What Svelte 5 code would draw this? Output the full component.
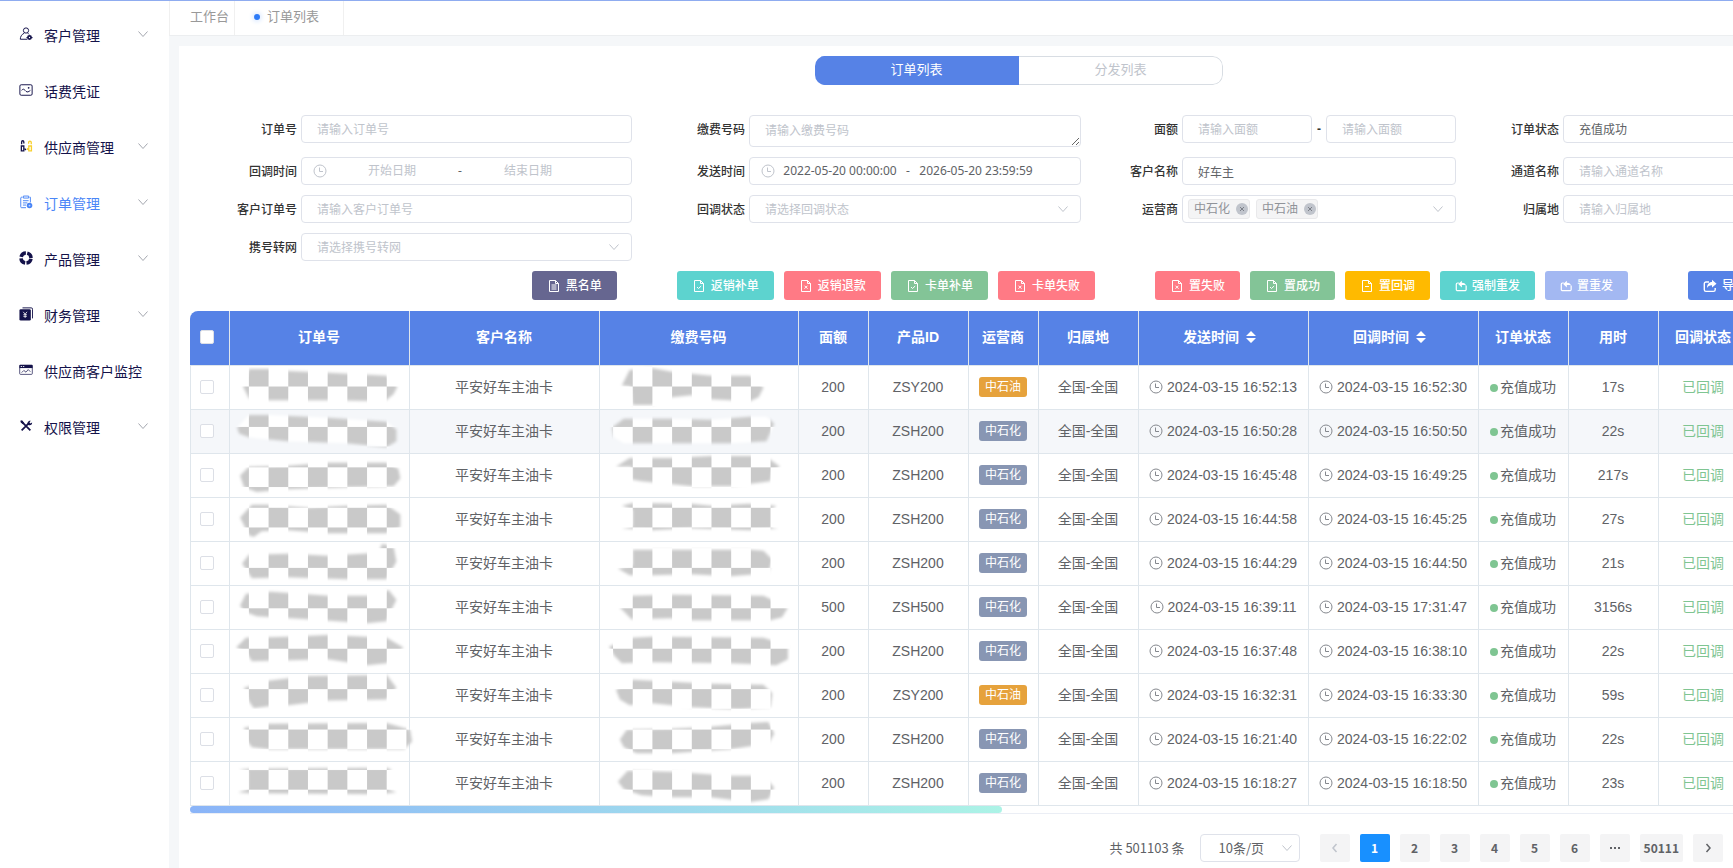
<script lang="ts">
  const menu = [
    { label: "客户管理", icon: "customer", sub: true },
    { label: "话费凭证", icon: "voucher", sub: false },
    { label: "供应商管理", icon: "supplier", sub: true },
    { label: "订单管理", icon: "order", sub: true },
    { label: "产品管理", icon: "product", sub: true },
    { label: "财务管理", icon: "finance", sub: true },
    { label: "供应商客户监控", icon: "monitor", sub: false },
    { label: "权限管理", icon: "auth", sub: true },
  ];

  const actions = [
    [{ label: "黑名单", icon: "list", color: "slate" }],
    [
      { label: "返销补单", icon: "check", color: "teal" },
      { label: "返销退款", icon: "cross", color: "red" },
      { label: "卡单补单", icon: "check", color: "green" },
      { label: "卡单失败", icon: "cross", color: "red" },
    ],
    [
      { label: "置失败", icon: "cross", color: "red" },
      { label: "置成功", icon: "check", color: "green" },
      { label: "置回调", icon: "minus", color: "amber" },
      { label: "强制重发", icon: "resend", color: "teal" },
      { label: "置重发", icon: "resend", color: "pale" },
    ],
    [{ label: "导出", icon: "export", color: "blue" }],
  ];

  // order / phone: outline of the smear that hides the number
  const rows = [
    { amount: 200, product: "ZSY200", carrier: "中石油", sent: "16:52:13", back: "16:52:30", cost: "17s",
      order: "11,21 17,3 37,3 57,5 98,7 158,10 169,21 165,29 156,36 98,35 37,35 17,33",
      phone: "20,20 28,4 51,2 71,6 111,10 151,10 158,14 165,22 160,32 151,36 111,34 91,30 71,32 51,40 31,40 29,21" },
    { amount: 200, product: "ZSH200", carrier: "中石化", sent: "16:50:28", back: "16:50:50", cost: "22s",
      order: "5,18 17,5 37,5 98,8 158,12 168,20 168,32 158,38 117,34 57,32 17,28 7,24",
      phone: "10,18 22,9 71,9 111,10 151,7 168,7 176,14 168,32 131,34 51,34 22,34 12,28" },
    { amount: 200, product: "ZSH200", carrier: "中石化", sent: "16:45:48", back: "16:49:25", cost: "217s",
      order: "8,22 17,13 57,12 98,9 158,9 170,15 172,25 165,33 117,34 57,36 25,39 12,34",
      phone: "14,13 28,4 71,4 111,2 158,2 172,6 182,13 174,18 172,28 131,33 91,33 71,31 40,28 30,26 30,13" },
    { amount: 200, product: "ZSH200", carrier: "中石化", sent: "16:44:58", back: "16:45:25", cost: "27s",
      order: "8,20 20,7 37,7 77,10 117,8 158,7 172,17 172,30 158,36 98,36 57,33 30,34 22,40 17,38 12,28",
      phone: "20,8 31,5 91,6 111,8 150,6 178,8 174,12 174,30 180,31 151,33 91,31 51,33 20,31 31,29 31,12" },
    { amount: 200, product: "ZSH200", carrier: "中石化", sent: "16:44:29", back: "16:44:50", cost: "21s",
      order: "10,22 17,13 57,12 98,14 150,11 153,2 165,4 168,20 158,38 117,38 57,36 20,37 14,28",
      phone: "16,27 31,24 31,8 151,8 165,9 174,18 170,32 131,35 91,33 51,34 28,34" },
    { amount: 500, product: "ZSH500", carrier: "中石化", sent: "16:39:11", back: "17:31:47", cost: "3156s",
      order: "8,20 14,8 40,6 98,10 140,10 160,4 168,14 162,26 158,36 138,38 77,34 25,31 12,26",
      phone: "18,22 30,10 71,9 165,10 190,22 184,32 172,35 91,35 71,33 30,34" },
    { amount: 200, product: "ZSH200", carrier: "中石化", sent: "16:37:48", back: "16:38:10", cost: "22s",
      order: "4,18 14,8 57,7 98,5 158,8 175,18 172,22 158,34 138,36 98,30 20,32 15,24",
      phone: "7,17 31,8 51,7 165,8 190,16 190,30 178,36 131,34 51,33 20,34 12,26" },
    { amount: 200, product: "ZSY200", carrier: "中石油", sent: "16:32:31", back: "16:33:30", cost: "59s",
      order: "12,14 37,7 77,2 158,1 168,14 158,26 98,27 57,32 37,33 22,35 17,28",
      phone: "14,16 31,6 91,9 111,10 165,11 174,20 172,34 140,36 91,34 51,30 28,32 18,26" },
    { amount: 200, product: "ZSH200", carrier: "中石化", sent: "16:21:40", back: "16:22:02", cost: "22s",
      order: "12,10 37,6 158,5 182,12 184,24 176,32 98,32 37,32 20,30 14,22",
      phone: "18,22 25,12 71,11 111,9 151,5 170,4 176,16 170,26 131,32 71,36 35,36 22,30" },
    { amount: 200, product: "ZSH200", carrier: "中石化", sent: "16:18:27", back: "16:18:50", cost: "23s",
      order: "7,8 17,7 158,6 163,8 160,12 160,28 168,31 150,33 17,32 6,31 16,28 16,10",
      phone: "16,20 26,9 71,10 131,14 165,14 176,26 170,38 151,41 111,36 71,36 40,34 22,28" },
  ];

  const columns = ["订单号", "客户名称", "缴费号码", "面额", "产品ID", "运营商", "归属地", "发送时间", "回调时间", "订单状态", "用时", "回调状态"];
  const widths = [40, 180, 190, 199, 70, 100, 70, 100, 170, 170, 90, 90, 90];
  const sortable = ["发送时间", "回调时间"];

  let active = $state("订单管理");
  let view = $state("订单列表");
  let page = $state(1);
  let carriers = $state(["中石化", "中石油"]);
</script>

{#snippet chevron()}
  <svg class="chevron" viewBox="0 0 12 12" aria-hidden="true"><path d="M1.500 3.500 6 8.500l4.500-5" /></svg>
{/snippet}

{#snippet clock()}
  <svg class="clock" viewBox="0 0 14 14" aria-hidden="true">
    <circle cx="7" cy="7" r="6" /><path d="M6.500 3.500v4h3.500" />
  </svg>
{/snippet}

{#snippet menuIcon(name: string)}
  <svg class="menu-icon" viewBox="0 0 16 16" aria-hidden="true">
    {#if name === "customer"}
      <circle cx="8" cy="4" r="3" class="line" />
      <path d="M6 7C3 8.500 1.500 11 1.500 14h8M10 7l1.500 1.500" class="line" />
      <circle cx="12" cy="12" r="2.800" /><path d="M8.500 11.500h7v1.200h-7z" />
      <circle cx="12" cy="12" r=".8" fill="#fff" />
    {:else if name === "voucher"}
      <rect x="1" y="2" width="14" height="12" rx="1.500" class="line" />
      <path d="M3 8.500c2-3 3.500-.5 5 1s3 .5 5-1" class="line" /><circle cx="11" cy="5.500" r="1" />
    {:else if name === "supplier"}
      <path d="M3 6V3.500C3 1.500 5.500 1.500 5.500 3.500V5M2.700 8h2.800v5.500H2.700zM6.500 11l1.500 1.500" class="line bold" />
      <path d="M11 5.500V4c0-2 3-2 3 0v2M11.200 8h3v5.500h-3zM10.500 10.500 9 12" class="line bold gold" />
    {:else if name === "order"}
      <path d="M4 2.500H3a1 1 0 0 0-1 1v10a1 1 0 0 0 1 1h5M12 2.500h1v6M5 1.200h6v2.300H5zM4.500 6.500h6.500M4.500 9h5M4.500 11.500h3.500" class="line" />
      <circle cx="12" cy="12" r="3.200" /><circle cx="12" cy="12" r="1" fill="#bcd4fb" />
    {:else if name === "product"}
      <circle cx="8" cy="8" r="5.700" class="ring" />
    {:else if name === "finance"}
      <path d="M4 1h10a1.500 1.500 0 0 1 1.500 1.500V13" class="line" />
      <rect x=".5" y="2.500" width="13" height="13" rx="1.500" />
      <path d="M4.800 5.500 7 8.200l2.200-2.700M7 8v4.500M5 8.800h4M5 10.700h4" stroke="#fff" stroke-width=".9" fill="none" />
    {:else if name === "monitor"}
      <rect x=".8" y="2.500" width="14.400" height="10.500" rx="1" class="line thin" />
      <path d="M.5 2.200h15v3.600H.5z" /><path d="M2 4h1.500M4.500 4H6" stroke="#fff" />
      <path d="m3 11 2.500-2.500L8 10.500l2.500-3 2.500 2.500" class="line thin" />
    {:else}
      <path d="m3 3 10 10M3 13l8-8" class="line thick" />
      <path d="M10 6.500C9 4 11 1.500 13.500 2L12 3.800l.8 1.200 2.200-1c.2 2.500-2 4-5 2.500z" />
      <path d="m1.500 2 2-.5L6 4.500 4.500 6 2 4z" />
    {/if}
  </svg>
{/snippet}

{#snippet actionIcon(name: string)}
  <svg class="action-icon" class:small={name === "resend"} viewBox="0 0 14 14" aria-hidden="true">
    {#if name === "resend"}
      <path d="M4.500 3.500H3A1.500 1.500 0 0 0 1.500 5v6A1.500 1.500 0 0 0 3 12.500h8.500a1.500 1.500 0 0 0 1.500-1.500V6.500" stroke-width="1.400" />
      <path d="M8 .8v2.500c3 0 4.700 1.500 4.700 3.200C11.200 5.800 10 5.900 8 5.900v2.800L3.700 4.700z" fill="currentColor" stroke="none" />
    {:else if name === "export"}
      <path d="M6 3H3A1.700 1.700 0 0 0 1.300 4.700v6A1.700 1.700 0 0 0 3 12.400h7.500a1.700 1.700 0 0 0 1.700-1.700V9" stroke-width="1.400" />
      <path d="M9 .8 13.500 4.700 9 8.500V6.300C6.500 6.200 5.200 7 4 9c0-3.500 2-6 5-6z" fill="currentColor" stroke="none" />
    {:else}
      <path d="M2.500 1.500h6l3 3v8h-9zM8.500 1.500v3h3" />
      {#if name === "list"}<path d="M4.500 6h5M4.500 8h5M4.500 10h5" />
      {:else if name === "check"}<path d="m5 8 1.500 1.500L9.200 7" />
      {:else if name === "cross"}<path d="m5.500 6.700 3 3M8.500 6.700l-3 3" />
      {:else}<path d="M5 7.500h4" />{/if}
    {/if}
  </svg>
{/snippet}

{#snippet mosaic(id: string, points: string, x: number, row: number)}
  <svg class="mosaic" viewBox="0 0 200 44" aria-hidden="true">
    <defs>
      <pattern id="{id}-check" {x} y={21 - (11 * row) / 3} width="40.300" height="40.300" patternUnits="userSpaceOnUse">
        <rect width="41" height="41" fill="#fff" />
        <rect x="20.150" width="20.150" height="20.150" fill="#c9c9c9" />
        <rect y="20.150" width="20.150" height="20.150" fill="#c9c9c9" />
      </pattern>
      <filter id="{id}-soft" x="-10%" y="-20%" width="120%" height="140%"><feGaussianBlur stdDeviation="1.600" /></filter>
      <mask id="{id}-mask" maskUnits="userSpaceOnUse" x="-5" y="-5" width="210" height="54">
        <polygon {points} fill="#fff" filter="url(#{id}-soft)" />
      </mask>
    </defs>
    <rect x="-5" y="-5" width="210" height="54" fill="url(#{id}-check)" mask="url(#{id}-mask)" />
  </svg>
{/snippet}

<div class="app">
  <aside>
    <nav>
      {#each menu as item}
        <a href="#{item.icon}" class:active={active === item.label} onclick={() => (active = item.label)}>
          {@render menuIcon(item.icon)}
          <span>{item.label}</span>
          {#if item.sub}{@render chevron()}{/if}
        </a>
      {/each}
    </nav>
  </aside>

  <main>
    <div class="tabs">
      <a href="#home">工作台</a>
      <a href="#orders" class="current"><i></i>订单列表</a>
    </div>

    <section class="card">
      <div class="toggle">
        {#each ["订单列表", "分发列表"] as name}
          <button class:on={view === name} onclick={() => (view = name)}>{name}</button>
        {/each}
      </div>

      <form class="filters">
        <label for="order-no">订单号</label>
        <input id="order-no" placeholder="请输入订单号" />
        <label for="phone">缴费号码</label>
        <textarea id="phone" placeholder="请输入缴费号码"></textarea>
        <label for="amount-min">面额</label>
        <div class="pair">
          <input id="amount-min" placeholder="请输入面额" />
          <b>-</b>
          <input aria-label="最大面额" placeholder="请输入面额" />
        </div>
        <label for="status">订单状态</label>
        <div class="select">
          <select id="status"><option>充值成功</option></select>
          {@render chevron()}
        </div>

        <label for="back-start">回调时间</label>
        <div class="range">
          {@render clock()}
          <input id="back-start" placeholder="开始日期" />
          <span>-</span>
          <input aria-label="结束日期" placeholder="结束日期" />
        </div>
        <label for="send-start">发送时间</label>
        <div class="range">
          {@render clock()}
          <input id="send-start" value="2022-05-20 00:00:00" />
          <span>-</span>
          <input aria-label="结束时间" value="2026-05-20 23:59:59" />
        </div>
        <label for="customer-name">客户名称</label>
        <input id="customer-name" value="好车主" />
        <label for="channel">通道名称</label>
        <input id="channel" placeholder="请输入通道名称" />

        <label for="customer-no">客户订单号</label>
        <input id="customer-no" placeholder="请输入客户订单号" />
        <label for="back-status">回调状态</label>
        <div class="select">
          <select id="back-status" class="empty"><option>请选择回调状态</option></select>
          {@render chevron()}
        </div>
        <label for="carrier">运营商</label>
        <div class="select chips">
          {#each carriers as name}
            <span class="chip">
              {name}
              <button type="button" aria-label="移除{name}" onclick={() => (carriers = carriers.filter((c) => c !== name))}>
                <svg viewBox="0 0 12 12"><path d="m4 4 4 4M8 4l-4 4" /></svg>
              </button>
            </span>
          {/each}
          <input id="carrier" />
          {@render chevron()}
        </div>
        <label for="region">归属地</label>
        <input id="region" placeholder="请输入归属地" />

        <label for="ported">携号转网</label>
        <div class="select">
          <select id="ported" class="empty"><option>请选择携号转网</option></select>
          {@render chevron()}
        </div>
      </form>

      <div class="actions">
        {#each actions as group}
          <div class="group">
            {#each group as a}
              <button class={a.color}>{@render actionIcon(a.icon)}{a.label}</button>
            {/each}
          </div>
        {/each}
      </div>

      <div class="table-wrap">
        <table>
          <colgroup>
            {#each widths as w}<col style="width: {w}px" />{/each}
          </colgroup>
          <thead>
            <tr>
              <th><input type="checkbox" aria-label="全选" /></th>
              {#each columns as c}
                <th>
                  {c}{#if sortable.includes(c)}<svg class="sort" viewBox="0 0 10 12" aria-hidden="true"><path d="M0 5 5 0l5 5zM0 7l5 5 5-5z" /></svg>{/if}
                </th>
              {/each}
            </tr>
          </thead>
          <tbody>
            {#each rows as r, i}
              <tr class:hover={i === 1}>
                <td><input type="checkbox" aria-label="选择第{i + 1}行" /></td>
                <td class="covered">{@render mosaic(`o${i}`, r.order, 17, i)}</td>
                <td>平安好车主油卡</td>
                <td class="covered">{@render mosaic(`p${i}`, r.phone, 11, i)}</td>
                <td>{r.amount}</td>
                <td>{r.product}</td>
                <td><span class="tag" class:orange={r.carrier === "中石油"}>{r.carrier}</span></td>
                <td>全国-全国</td>
                <td class="time">{@render clock()}2024-03-15 {r.sent}</td>
                <td class="time">{@render clock()}2024-03-15 {r.back}</td>
                <td><i class="dot"></i>充值成功</td>
                <td>{r.cost}</td>
                <td class="done">已回调</td>
              </tr>
            {/each}
          </tbody>
        </table>
        <div class="scrollbar"><div class="thumb"></div></div>
      </div>

      <div class="pager">
        <span class="total">共 501103 条</span>
        <div class="select size">
          <select aria-label="每页条数"><option>10条/页</option></select>
          {@render chevron()}
        </div>
        <div class="pages">
          <button disabled aria-label="上一页"><svg viewBox="0 0 12 12"><path d="M7.500 2 4 6l3.500 4" /></svg></button>
          {#each [1, 2, 3, 4, 5, 6] as n}
            <button class:on={page === n} onclick={() => (page = n)}>{n}</button>
          {/each}
          <button aria-label="更多"><svg viewBox="0 0 12 12"><path d="M1 5h2v2H1zM5 5h2v2H5zM9 5h2v2H9z" class="solid" /></svg></button>
          <button onclick={() => (page = 50111)}>50111</button>
          <button aria-label="下一页"><svg viewBox="0 0 12 12"><path d="M4.500 2 8 6l-3.500 4" /></svg></button>
        </div>
      </div>
    </section>
  </main>
</div>

<style>
  :global(body) {
    overflow: hidden;
  }
  .app {
    display: flex;
    min-height: 100vh;
    border-top: 1px solid #8facf0;
    box-sizing: border-box;
    background: #f5f7f9;
    color: #606266;
    font: 12px/16px "Liberation Sans", "Noto Sans CJK SC", sans-serif;
  }
  .app :global(*) {
    box-sizing: border-box;
  }
  button, input, select, textarea {
    font: inherit;
    color: inherit;
    margin: 0;
  }
  button {
    border: 0;
    padding: 0;
    cursor: pointer;
  }
  svg {
    fill: none;
    stroke: currentColor;
    flex: none;
  }
  .chevron {
    width: 12px;
    height: 12px;
    color: #c0c4cc;
  }
  .clock {
    width: 14px;
    height: 14px;
  }

  aside {
    width: 169px;
    flex: none;
    background: #fff;
    padding-top: 6px;
  }
  nav a {
    display: flex;
    align-items: center;
    height: 56px;
    padding: 0 20px 2px 19px;
    color: #14124a;
    font-size: 14px;
    text-decoration: none;
    white-space: nowrap;
  }
  nav a.active { color: #4a86f7; }
  nav span {
    margin-left: 11px;
    padding-top: 4px;
  }
  nav .chevron {
    margin-left: auto;
    color: #a5a8b0;
  }
  .menu-icon {
    width: 14px;
    height: 14px;
    fill: currentColor;
    stroke: none;
  }
  .menu-icon .line {
    fill: none;
    stroke: currentColor;
    stroke-width: 1.100;
  }
  .menu-icon .thin { stroke-width: .8; }
  .menu-icon .bold { stroke-width: 1.500; }
  .menu-icon .gold { stroke: #f7cf2d; }
  .menu-icon .thick { stroke-width: 2; }
  .menu-icon .ring {
    fill: none;
    stroke: currentColor;
    stroke-width: 4;
    stroke-dasharray: 7.350 1.600;
    stroke-dashoffset: -.8;
  }

  main {
    flex: 1;
    min-width: 0;
    overflow: hidden;
  }
  .tabs {
    display: flex;
    height: 35px;
    background: #fff;
    border-bottom: 1px solid #eceef0;
    border-left: 1px solid #f0f0f0;
  }
  .tabs a {
    display: flex;
    align-items: center;
    padding: 0 5px 3px 20px;
    border-right: 1px solid #f0f0f0;
    color: #999;
    font-size: 13px;
    text-decoration: none;
  }
  .tabs .current { padding: 0 24px 3px 19px; }
  .tabs i {
    width: 6px;
    height: 6px;
    margin-right: 7px;
    border-radius: 50%;
    background: #2d7bf8;
    box-shadow: 0 0 4px 2px #e0ecff;
  }

  /* wider than most windows, the right part is cut */
  .card {
    min-width: 1680px;
    min-height: calc(100vh - 47px);
    margin: 10px 10px 0;
    padding: 10px 11px 20px;
    background: #fff;
  }
  .toggle {
    display: flex;
    width: 408px;
    margin: 0 auto 30px;
    border-radius: 10px;
    overflow: hidden;
  }
  .toggle button {
    flex: 1;
    height: 29px;
    padding-bottom: 2px;
    background: #fff;
    border: 1px solid #d8dde3;
    border-left: 0;
    border-radius: 0 10px 10px 0;
    color: #c0c4cc;
    font-size: 13px;
  }
  .toggle .on {
    background: #5682e6;
    border-color: #5682e6;
    border-radius: 0;
    color: #fff;
  }

  .filters {
    display: grid;
    grid-template-columns: 107px 331fr 109px 332fr 93px 274fr 99px 285fr;
    gap: 10px 4px;
    align-items: start;
  }
  .filters label {
    line-height: 30px;
    height: 28px;
    text-align: right;
    color: #333;
    font-weight: 500;
  }
  .filters > input, .filters textarea, .pair input, .select, .range {
    width: 100%;
    min-width: 0;
    height: 28px;
    padding: 1px 15px 0;
    border: 1px solid #dfe2ea;
    border-radius: 4px;
    background: #fff;
    outline: none;
  }
  .filters textarea {
    display: block;
    height: 32px;
    padding: 7px 15px;
    resize: vertical;
  }
  ::placeholder { color: #c0c4cc; }
  .pair {
    display: flex;
    align-items: center;
  }
  .pair b {
    flex: none;
    width: 14px;
    text-align: center;
    color: #333;
  }
  .select {
    display: flex;
    align-items: center;
    padding: 0 11px 0 0;
  }
  .select select {
    flex: 1;
    height: 26px;
    padding: 1px 15px 0;
    border: 0;
    background: none;
    appearance: none;
    outline: none;
  }
  .select .empty { color: #c0c4cc; }
  .chips {
    gap: 6px;
    padding-left: 5px;
  }
  .chips input {
    flex: 1;
    min-width: 0;
    border: 0;
    outline: none;
  }
  .chip {
    display: flex;
    align-items: center;
    gap: 6px;
    height: 20px;
    padding: 0 1px 0 5px;
    border: 1px solid #e9e9eb;
    border-radius: 3px;
    background: #f4f4f5;
    color: #909399;
    white-space: nowrap;
  }
  .chip button {
    width: 12px;
    height: 12px;
    border-radius: 50%;
    background: #c0c4cc;
    color: #7c8089;
  }
  .chip svg { display: block; }
  .range {
    display: flex;
    align-items: center;
    padding: 0 11px;
    color: #606266;
    font-family: "Noto Sans", "Noto Sans CJK SC", sans-serif;
  }
  .range .clock {
    margin-right: 4px;
    color: #c0c4cc;
  }
  .range input {
    width: 122px;
    padding: 0;
    border: 0;
    text-align: center;
    outline: none;
  }
  .range span {
    width: 14px;
    text-align: center;
  }

  .actions {
    display: flex;
    justify-content: flex-end;
    gap: 60px;
    margin: 10px 87px 11px 0;
  }
  .group {
    display: flex;
    gap: 10px;
  }
  .actions button {
    display: flex;
    align-items: center;
    gap: 5px;
    height: 29px;
    padding: 0 15px;
    border-radius: 3px;
    color: #fff;
    font-weight: 500;
    white-space: nowrap;
  }
  .action-icon {
    width: 14px;
    height: 14px;
  }
  .action-icon.small {
    width: 12px;
    height: 12px;
  }
  .slate { background: #666690; }
  .teal { background: #5dd3cf; }
  .red { background: #ff7a85; }
  .green { background: #83c497; }
  .amber { background: #ffba00; }
  .pale { background: #a3b8f2; }
  .blue { background: #5682e6; }

  .table-wrap {
    border-radius: 8px 0 0 0;
    overflow: hidden;
    border-bottom: 1px solid #ebeef5;
  }
  table {
    width: 1559px;
    table-layout: fixed;
    border-collapse: separate;
    border-spacing: 0;
    font-size: 14px;
  }
  th, td {
    height: 44px;
    padding: 0 1px 2px 0;
    border-right: 1px solid #dfe6ec;
    border-bottom: 1px solid #dfe6ec;
    text-align: center;
    white-space: nowrap;
  }
  th:first-child { padding-right: 5px; }
  td:first-child {
    padding-right: 6px;
    border-left: 1px solid #dfe6ec;
  }
  th {
    height: 55px;
    background: #5682e6;
    color: #fff;
  }
  .covered { padding: 0; }
  .hover td { background: #f5f7fa; }
  table input {
    display: block;
    appearance: none;
    width: 14px;
    height: 14px;
    margin: 0 auto;
    border: 1px solid #dcdfe6;
    border-radius: 2px;
    background: #fff;
  }
  .sort {
    width: 10px;
    height: 12px;
    margin: 0 7px;
    vertical-align: -1px;
    fill: #fff;
    stroke: none;
  }
  .mosaic {
    display: block;
    width: 200px;
    height: 43px;
    margin-right: -20px;
    overflow: visible;
    stroke: none;
  }
  .tag {
    display: inline-block;
    height: 20px;
    padding: 0 6px;
    border-radius: 3px;
    background: #8896b3;
    color: #fff;
    font-size: 12px;
    line-height: 20px;
    vertical-align: middle;
  }
  .tag.orange { background: #e6a23c; }
  .time .clock {
    margin-right: 4px;
    vertical-align: -2px;
    stroke: #85888e;
  }
  .dot {
    display: inline-block;
    width: 8px;
    height: 8px;
    margin-right: 2px;
    border-radius: 50%;
    background: #7fc592;
  }
  .done { color: #7fc592; }
  .thumb {
    width: 49%;
    height: 7px;
    border-radius: 4px;
    background: linear-gradient(90deg, #8ab4f8, #acf3e6);
  }

  .pager {
    display: flex;
    justify-content: flex-end;
    align-items: center;
    margin: 20px 125px 0 0;
    font-family: "Noto Sans CJK SC", sans-serif;
    font-size: 13px;
  }
  .size {
    width: 100px;
    margin: 0 20px 0 15px;
    padding-right: 6px;
  }
  .size select {
    width: 80px;
    padding: 0 0 0 18px;
  }
  .pages {
    display: flex;
    gap: 10px;
  }
  .pages button {
    display: flex;
    align-items: center;
    justify-content: center;
    min-width: 30px;
    height: 28px;
    padding: 0 4px;
    border-radius: 2px;
    background: #f4f4f5;
    font-size: 12px;
    font-weight: 700;
  }
  .pages svg {
    width: 12px;
    height: 12px;
    stroke-width: 1.500;
  }
  .pages .solid {
    fill: currentColor;
    stroke: none;
  }
  .pages button:disabled { color: #c0c4cc; }
  .pages .on {
    background: #1890ff;
    color: #fff;
  }
</style>
